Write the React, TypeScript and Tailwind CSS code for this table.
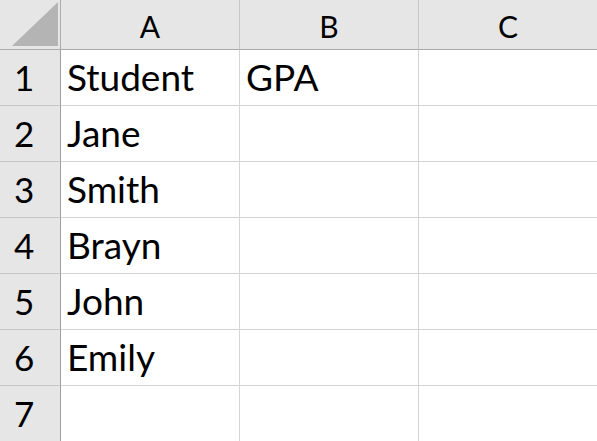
const cols = ["A", "B", "C"];
const rows: [string, string][] = [
  ["Student", "GPA"],
  ["Jane", ""],
  ["Smith", ""],
  ["Brayn", ""],
  ["John", ""],
  ["Emily", ""],
  ["", ""],
];

export default function App() {
  return (
    <div
      className="w-[597px] h-[441px] overflow-hidden bg-white text-black"
      style={{ fontFamily: "Lato, 'Open Sans', sans-serif" }}
    >
      <div className="grid grid-cols-[61px_179px_179px_179px] grid-rows-[50px_repeat(7,56px)]">
        {/* corner */}
        <div className="bg-[#e6e6e6] border-r border-b border-[#ababab] flex items-end justify-end pr-[2px] pb-[3px]">
          <svg width="46" height="44" viewBox="0 0 46 44">
            <polygon points="0,44 46,44 46,0" fill="#b4b4b4" />
          </svg>
        </div>
        {cols.map((c) => (
          <div
            key={c}
            className="bg-[#e6e6e6] border-r border-r-[#c6c6c6] border-b border-b-[#ababab] flex items-end justify-center pb-[8px] text-[30px] leading-none"
          >
            {c}
          </div>
        ))}

        {rows.map(([a, b], i) => (
          <div key={i} className="contents">
            <div className="bg-[#e6e6e6] border-r border-r-[#9f9f9f] border-b border-b-[#c6c6c6] flex items-end pl-[14px] pb-[10px] text-[35px] leading-none">
              {i + 1}
            </div>
            <div className="border-r border-b border-[#d4d4d4] flex items-end pl-[6px] pb-[10px] text-[37px] leading-none">
              {a}
            </div>
            <div className="border-r border-b border-[#d4d4d4] flex items-end pl-[6px] pb-[10px] text-[37px] leading-none">
              {b}
            </div>
            <div className="border-b border-[#d4d4d4]" />
          </div>
        ))}
      </div>
    </div>
  );
}
